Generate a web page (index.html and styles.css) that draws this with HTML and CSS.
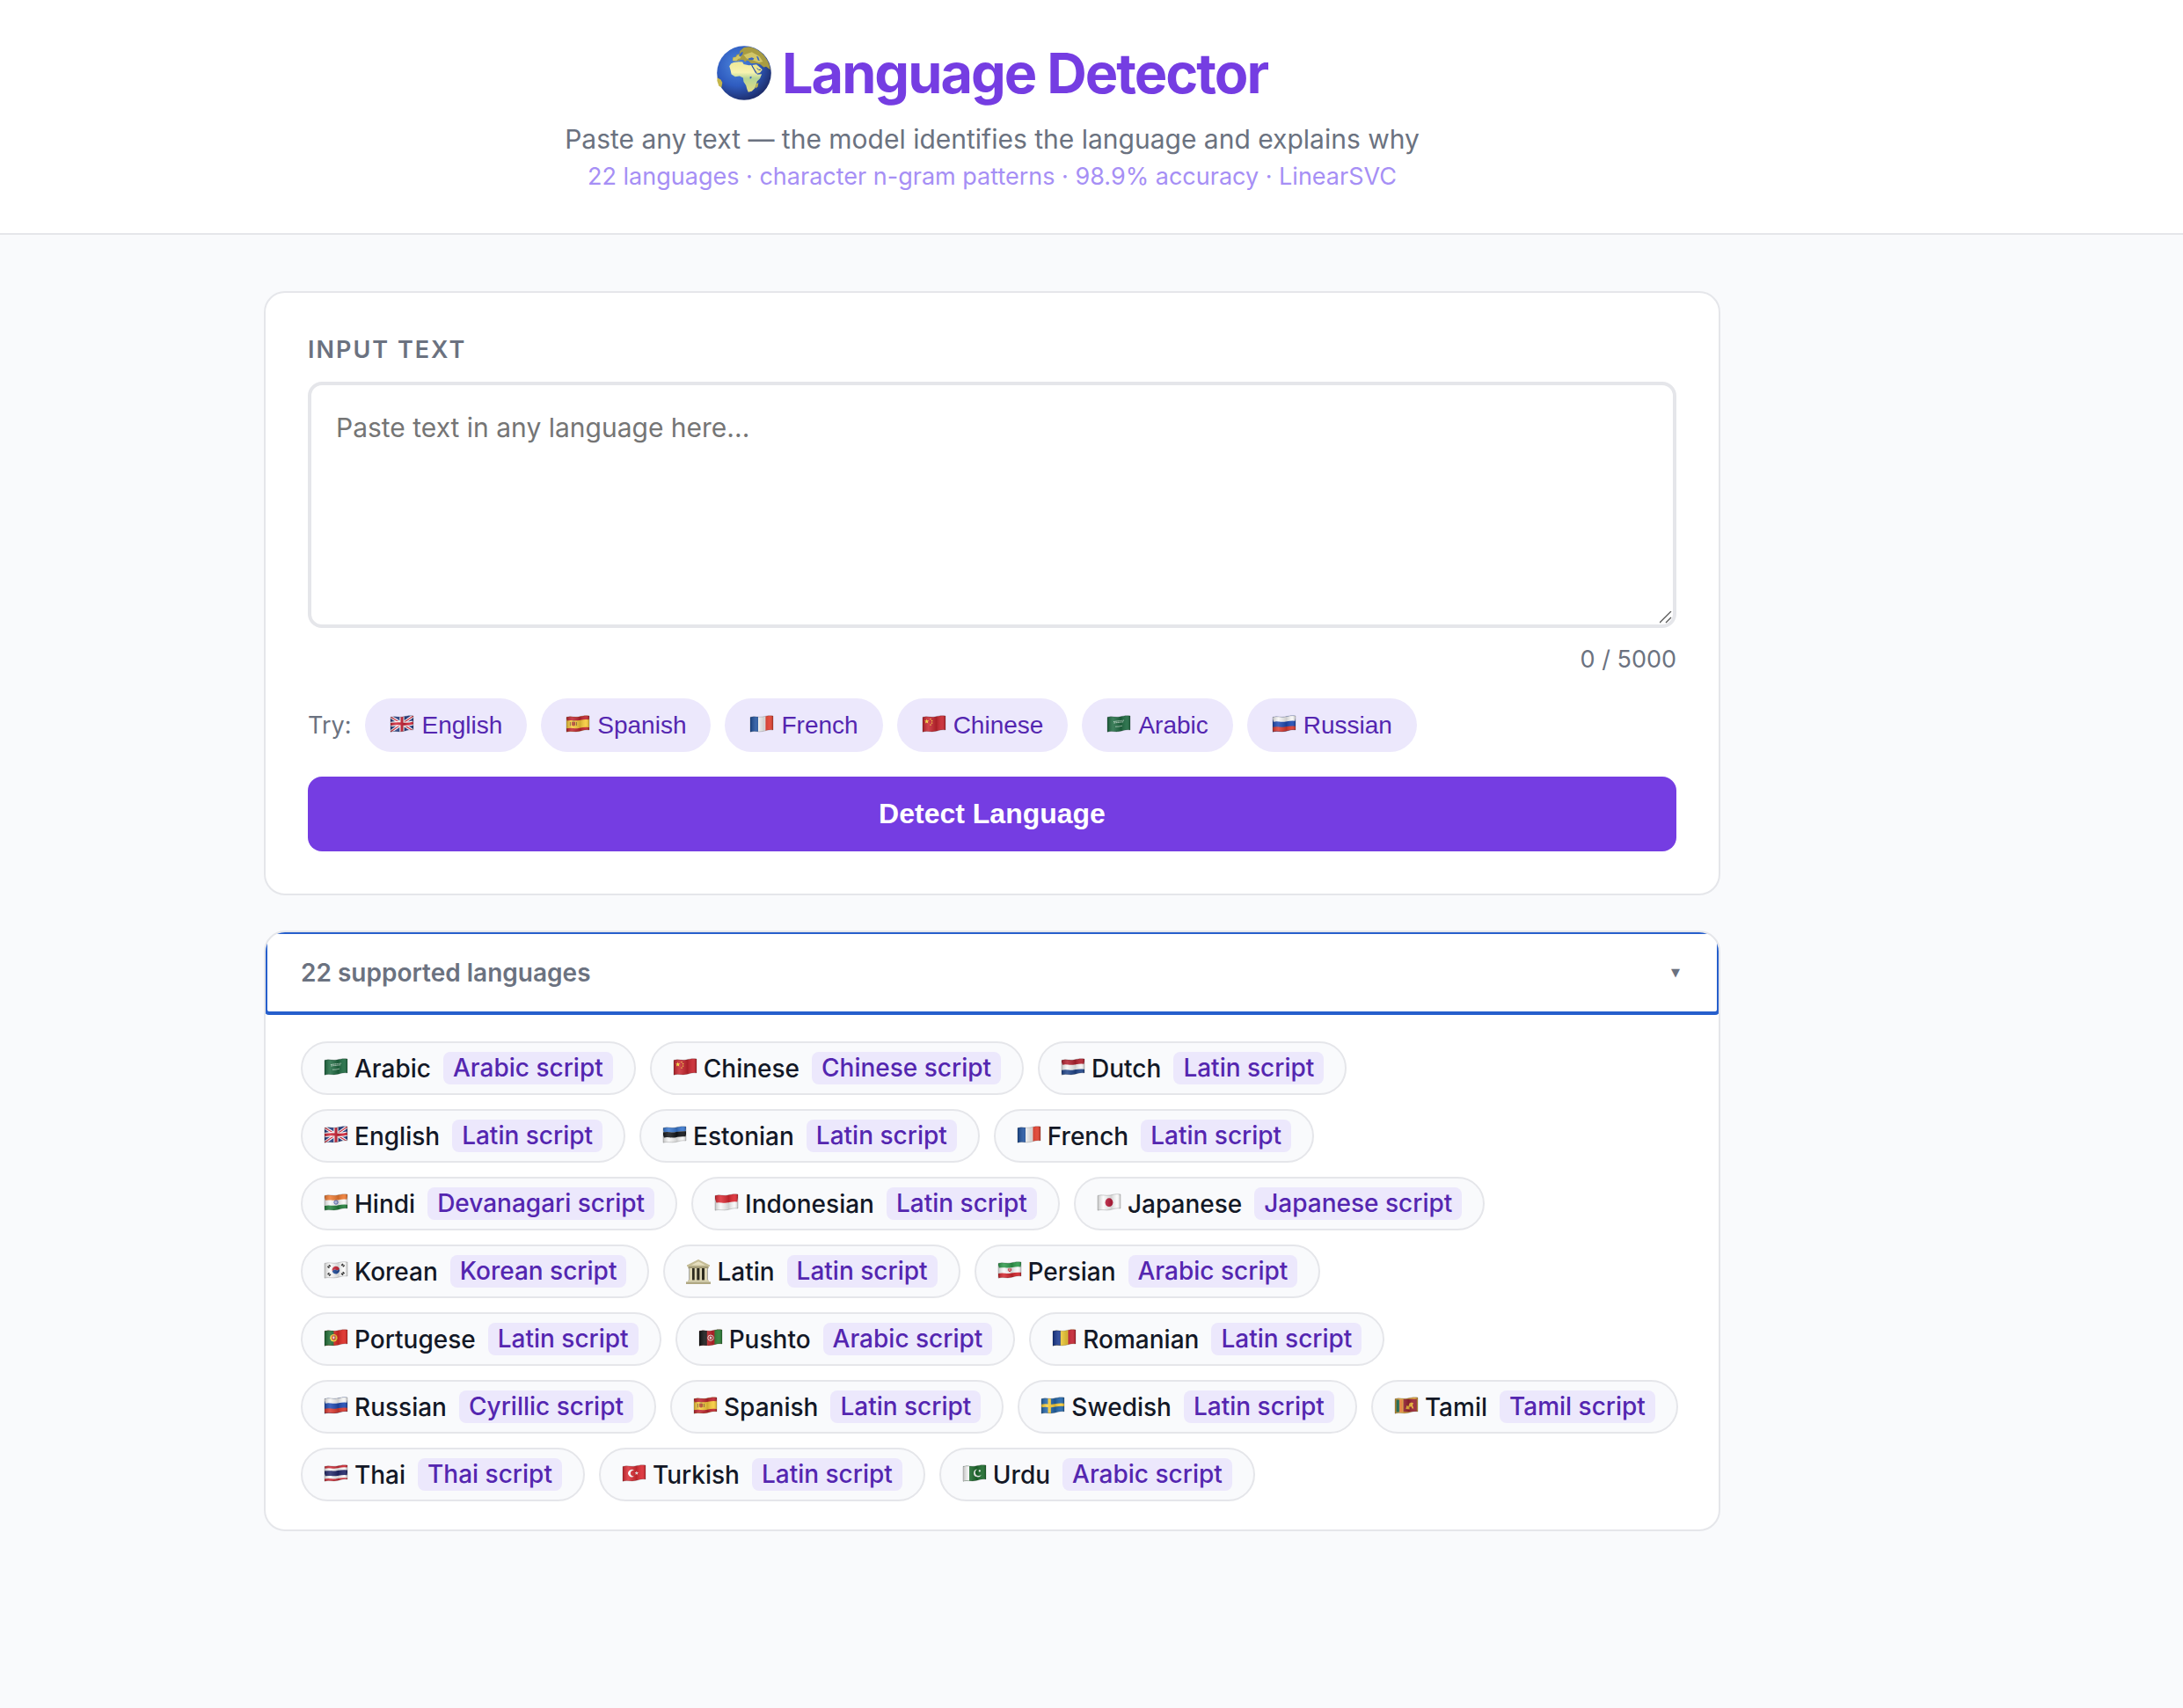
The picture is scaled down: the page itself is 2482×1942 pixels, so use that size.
FILE: index.html
```html
<!DOCTYPE html>
<html lang="en">
<head>
  <meta charset="UTF-8">
  <meta name="viewport" content="width=device-width, initial-scale=1.0">
  <title>Language Detector</title>
  <link rel="stylesheet" href="styles.css">
</head>
<body>
  <!-- Flag icons -->
  <svg class="sprite" aria-hidden="true">
    <defs>
      <path id="band" d="M0 1.2C5-.4 9 1.8 14 .8S21-.8 26 0" fill="none"/>
      <path id="cloth" d="M0 2.4C5 .8 9 3 14 2S21 .2 26 1V17C21 16.2 19 17.6 14 18.6S5 17.6 0 19.2Z"/>
      <clipPath id="wave"><use href="#cloth"/></clipPath>
      <linearGradient id="fold">
        <stop offset="0" stop-color="#000" stop-opacity=".22"/>
        <stop offset=".25" stop-color="#fff" stop-opacity=".14"/>
        <stop offset=".6" stop-color="#000" stop-opacity=".16"/>
        <stop offset=".85" stop-color="#fff" stop-opacity=".08"/>
        <stop offset="1" stop-color="#000" stop-opacity=".22"/>
      </linearGradient>
      <g id="shade">
        <use href="#cloth" fill="url(#fold)" stroke="#000" stroke-opacity=".22" stroke-width=".8"/>
      </g>
      <radialGradient id="sea" cx=".38" cy=".35" r=".7">
        <stop offset="0" stop-color="#4d86dc"/>
        <stop offset=".55" stop-color="#2f5cc0"/>
        <stop offset="1" stop-color="#1c2a66"/>
      </radialGradient>
      <linearGradient id="land" x1="0" y1="0" x2="0" y2="1">
        <stop offset="0" stop-color="#eee896"/>
        <stop offset=".35" stop-color="#f8f3b0"/>
        <stop offset=".55" stop-color="#b5d596"/>
        <stop offset="1" stop-color="#e6dc82"/>
      </linearGradient>
    </defs>

    <symbol id="sa" viewBox="-1 0 28 24">
      <g clip-path="url(#wave)"><rect width="26" height="20" fill="#1f6b42"/>
        <path d="M7 7.5q6-.8 12-1.4M7.5 9q6-.8 11-1.2" stroke="#cfe3d6" stroke-width="1" stroke-dasharray="1.6 .6" fill="none"/>
        <path d="M9 13.2q4 .2 8-1" stroke="#a9cdb7" stroke-width=".9" fill="none"/></g>
      <use href="#shade"/>
    </symbol>
    <symbol id="cn" viewBox="-1 0 28 24">
      <g clip-path="url(#wave)"><rect width="26" height="20" fill="#c9262f"/>
        <path d="M4.6 4.4l.7 1.9 2 .1-1.6 1.2.6 2-1.7-1.2-1.7 1.2.6-2L2 6.4l2-.1z" fill="#ffe23d"/>
        <path d="M8.4 4h1.2v1.2H8.4zM10 6h1.2v1.2H10zM10 8.6h1.2v1.2H10zM8.4 10.6h1.2v1.2H8.4z" fill="#ffe23d"/></g>
      <use href="#shade"/>
    </symbol>
    <symbol id="nl" viewBox="-1 0 28 24">
      <g clip-path="url(#wave)" stroke-width="6.6"><rect width="26" height="20" fill="#f5f5f5"/>
        <use href="#band" y="3.4" stroke="#b32230"/><use href="#band" y="16" stroke="#21468b"/></g>
      <use href="#shade"/>
    </symbol>
    <symbol id="gb" viewBox="-1 0 28 24">
      <g clip-path="url(#wave)"><rect width="26" height="20" fill="#20397f"/>
        <path d="M0 2l26 16M0 19L26 1" stroke="#fff" stroke-width="3.4"/>
        <path d="M0 2l26 16M0 19L26 1" stroke="#cf2539" stroke-width="1.3"/>
        <path d="M13 0v20M0 10.6q6-1.4 13-.6t13-1" stroke="#fff" stroke-width="5.4" fill="none"/>
        <path d="M13 0v20M0 10.6q6-1.4 13-.6t13-1" stroke="#cf2539" stroke-width="3" fill="none"/></g>
      <use href="#shade"/>
    </symbol>
    <symbol id="ee" viewBox="-1 0 28 24">
      <g clip-path="url(#wave)" stroke-width="6"><rect width="26" height="20" fill="#f6f6f6"/>
        <use href="#band" y="3.6" stroke="#3a78cf"/><use href="#band" y="9.4" stroke="#14161a"/></g>
      <use href="#shade"/>
    </symbol>
    <symbol id="fr" viewBox="-1 0 28 24">
      <g clip-path="url(#wave)"><rect width="26" height="20" fill="#f8f8f8"/>
        <rect width="9" height="20" fill="#1c4f9c"/><rect x="17.4" width="9" height="20" fill="#e2402f"/></g>
      <use href="#shade"/>
    </symbol>
    <symbol id="in" viewBox="-1 0 28 24">
      <g clip-path="url(#wave)" stroke-width="6.4"><rect width="26" height="20" fill="#f8f8f8"/>
        <use href="#band" y="3.6" stroke="#f07c33"/><use href="#band" y="16" stroke="#23803c"/></g>
      <circle cx="13" cy="10" r="2.2" fill="#c3cbea" stroke="#3c4fa8" stroke-width=".8"/>
      <use href="#shade"/>
    </symbol>
    <symbol id="id" viewBox="-1 0 28 24">
      <g clip-path="url(#wave)" stroke-width="9.6"><rect width="26" height="20" fill="#f8f8f8"/>
        <use href="#band" y="4.8" stroke="#dd2a33"/></g>
      <use href="#shade"/>
    </symbol>
    <symbol id="jp" viewBox="-1 0 28 24">
      <use href="#cloth" fill="#fafafa"/>
      <ellipse cx="13" cy="10.2" rx="4.4" ry="4.9" fill="#c0203f"/>
      <use href="#shade"/>
    </symbol>
    <symbol id="kr" viewBox="-1 0 28 24">
      <use href="#cloth" fill="#fbfbfb"/>
      <path d="M8.8 11.4a4.3 4.3 0 0 1 8.2-2.6q-2 2.6-4 1.2t-4.2 1.4" fill="#cf2b3c"/>
      <path d="M17 8.8a4.3 4.3 0 0 1-8.2 2.6q2-2.8 4.2-1.4t4-1.2" fill="#23509e"/>
      <path d="M4 7.4l2.6-3.2M19.6 3.4l3 2.8M4 13.6l2.8 2.8M19.6 15.4l2.8-3" stroke="#222" stroke-width="2.6" stroke-dasharray="1.6 .5"/>
      <use href="#shade"/>
    </symbol>
    <symbol id="va" viewBox="0 0 28 28">
      <path d="M14 0L27 6.4V8H1V6.4z" fill="#c4bc95"/>
      <path d="M14 2.2l8 4.2H6z" fill="#e6dfc0"/>
      <path d="M2.4 8h23.2v2.2H2.4z" fill="#a29a76"/>
      <path d="M3.6 10h20.8v14H3.6z" fill="#2d2a1e"/>
      <path d="M4 10h3v14H4zM9.7 10h2.6v14H9.7zM15.4 10H18v14h-2.6zM21 10h3v14h-3z" fill="#ddd6b4"/>
      <path d="M2 23.4h24v2H2z" fill="#d8d1ae"/><path d="M0 25.4h28V28H0z" fill="#b0a883"/>
    </symbol>
    <symbol id="ir" viewBox="-1 0 28 24">
      <g clip-path="url(#wave)" stroke-width="6.2"><rect width="26" height="20" fill="#f8f8f8"/>
        <use href="#band" y="3.4" stroke="#2f9a4c"/><use href="#band" y="16" stroke="#d3262d"/></g>
      <path d="M11.4 8.4q-1 2.6 1.6 3.4 2.6-.8 1.6-3.4M13 7.8v4" stroke="#d8333a" stroke-width="1" fill="none"/>
      <use href="#shade"/>
    </symbol>
    <symbol id="pt" viewBox="-1 0 28 24">
      <g clip-path="url(#wave)"><rect width="26" height="20" fill="#df2c26"/><rect width="10.4" height="20" fill="#1f6d34"/></g>
      <circle cx="10.4" cy="10.2" r="4.2" fill="#f3d43a"/>
      <path d="M8.3 7.6h4.2v3.6q-2.1 3.2-4.2 0z" fill="#d12a2a"/><path d="M9.4 8.6h2v2.2q-1 1.4-2 0z" fill="#f4f4f4"/>
      <use href="#shade"/>
    </symbol>
    <symbol id="af" viewBox="-1 0 28 24">
      <g clip-path="url(#wave)"><rect width="26" height="20" fill="#c1252b"/><rect width="8.8" height="20" fill="#111"/>
        <rect x="17.4" width="9" height="20" fill="#2a7d33"/></g>
      <circle cx="13" cy="10.2" r="3.2" fill="none" stroke="#f2e6e2" stroke-width="1"/><path d="M11.8 8.8h2.4v2.8h-2.4z" fill="#f2e6e2"/>
      <use href="#shade"/>
    </symbol>
    <symbol id="ro" viewBox="-1 0 28 24">
      <g clip-path="url(#wave)"><rect width="26" height="20" fill="#f8d23c"/><rect width="8.8" height="20" fill="#15348c"/>
        <rect x="17.4" width="9" height="20" fill="#c42434"/></g>
      <use href="#shade"/>
    </symbol>
    <symbol id="ru" viewBox="-1 0 28 24">
      <g clip-path="url(#wave)" stroke-width="6.6"><rect width="26" height="20" fill="#1f4bb4"/>
        <use href="#band" y="3.4" stroke="#f6f6f6"/><use href="#band" y="16" stroke="#db3a30"/></g>
      <use href="#shade"/>
    </symbol>
    <symbol id="es" viewBox="-1 0 28 24">
      <g clip-path="url(#wave)" stroke-width="5"><rect width="26" height="20" fill="#f8cc3c"/>
        <use href="#band" y="2.8" stroke="#c12630"/><use href="#band" y="16.6" stroke="#c12630"/></g>
      <path d="M6 8h4v3.4q-2 2-4 0z" fill="#b5482f"/><path d="M4.4 8v4.4M11.4 8v4M6.4 7h3" stroke="#8a6a3a" stroke-width="1"/>
      <use href="#shade"/>
    </symbol>
    <symbol id="se" viewBox="-1 0 28 24">
      <g clip-path="url(#wave)"><rect width="26" height="20" fill="#2467ab"/>
        <path d="M9.2 0v20" stroke="#fbd03b" stroke-width="3.4"/><use href="#band" y="9.4" stroke="#fbd03b" stroke-width="3.4"/></g>
      <use href="#shade"/>
    </symbol>
    <symbol id="lk" viewBox="-1 0 28 24">
      <g clip-path="url(#wave)"><rect width="26" height="20" fill="#dba33a"/><path d="M1.6 3.6h3.4v14H1.6z" fill="#1d6c52"/>
        <path d="M5 3.6h3.4v14H5z" fill="#e5752c"/><path d="M9.6 2.8h15.2v14.4H9.6z" fill="#9a2434"/>
        <path d="M12.4 14l1-4 2 1 1-3.4 2.6-1.2 2 1.2-1 2 1.2 4-1.6-.2-1-2.2-2.2.6.2 2.6z" fill="#f0b83a"/></g>
      <use href="#shade"/>
    </symbol>
    <symbol id="th" viewBox="-1 0 28 24">
      <g clip-path="url(#wave)"><rect width="26" height="20" fill="#f6f6f6"/>
        <use href="#band" y="1.8" stroke="#cf2b36" stroke-width="3.6"/><use href="#band" y="9.4" stroke="#24296a" stroke-width="5.8"/>
        <use href="#band" y="17" stroke="#cf2b36" stroke-width="3.2"/></g>
      <use href="#shade"/>
    </symbol>
    <symbol id="tr" viewBox="-1 0 28 24">
      <use href="#cloth" fill="#dc2c34"/>
      <path d="M13 6.8a4.2 4.2 0 1 0 0 6.6 3.4 3.4 0 1 1 0-6.6" fill="#fff"/>
      <path d="M15.8 7.6l.6 1.5 1.6.1-1.2 1 .4 1.6-1.4-.9-1.4.9.4-1.6-1.2-1 1.6-.1z" fill="#fff"/>
      <use href="#shade"/>
    </symbol>
    <symbol id="pk" viewBox="-1 0 28 24">
      <g clip-path="url(#wave)"><rect width="26" height="20" fill="#1d6b2d"/><rect width="7" height="20" fill="#f6f6f6"/></g>
      <path d="M16.4 5.4a4.5 4.5 0 1 0 4.4 6 3.9 3.9 0 1 1-4.4-6" fill="#fff"/><circle cx="18.8" cy="7.4" r="1.1" fill="#fff"/>
      <use href="#shade"/>
    </symbol>
    <symbol id="globe" viewBox="0 0 187 187">
      <circle cx="93.500" cy="93.500" r="93" fill="url(#sea)"/>
      <path d="M54 52l1-12 10-2 3-8 10-2 1-10 14-12 18-2c28 6 48 20 62 46 6 12 9 20 10 32l-6-4-8-6-8 2-12-10-12-4-20 0-8-8-6-2-6 6-6-8-10 0-6 4z" fill="#a89c42"/>
      <path d="M55 51l1-10 9-2 8-8 10 4-2 8-8 2-6 7zM92 32l28-10 26 14 12 18-14 4-20-8-22-6z" fill="#d2c667"/>
      <path d="M82 24l8-4-2 10-8 8-4-4z" fill="#3766c4"/>
      <path d="M108 44l12-4 8 4-4 5-14 0zM136 36l6 2 5 14-6-2z" fill="#3766c4"/>
      <path d="M43 70l6-9 9-4 17-2 13 1 4 7 18 4 8-1 6 12 8 15 8 6 14-2-6 15-10 10-3 12-5 12-10 10-12 3-4-9-4-14-8-12-2-14-12-6-15 2-13-8-3-14z" fill="url(#land)"/>
      <path d="M122 66l14-2 14 12 6 6-8 11-11 3-8-12z" fill="#ece590"/>
      <path d="M138 77l6 6 7-1" fill="none" stroke="#2b4f9c" stroke-width="3"/>
      <path d="M120 68l9 14 8 13" fill="none" stroke="#2b4f9c" stroke-width="3"/>
      <path d="M134 132l9-5-3 14-7 5zM2 109l12 8 5 10-3 16-9-5-6-18z" fill="#c5b64b"/>
      <path d="M113 107l6-2v6l-5 3z" fill="#3766c4"/>
    </symbol>
  </svg>

  <header>
    <h1><svg class="globe" aria-hidden="true"><use href="#globe"/></svg>Language Detector</h1>
    <p class="subtitle">Paste any text — the model identifies the language and explains why</p>
    <p class="tagline">22 languages · character n-gram patterns · 98.9% accuracy · LinearSVC</p>
  </header>

  <main>
    <section class="card input-card">
      <label for="input-text">Input text</label>
      <textarea id="input-text" maxlength="5000" placeholder="Paste text in any language here..."></textarea>
      <div class="counter" id="counter">0 / 5000</div>
      <div class="examples">
        <span>Try:</span>
        <button type="button" class="example"><svg class="flag"><use href="#gb"/></svg>English</button>
        <button type="button" class="example"><svg class="flag"><use href="#es"/></svg>Spanish</button>
        <button type="button" class="example"><svg class="flag"><use href="#fr"/></svg>French</button>
        <button type="button" class="example"><svg class="flag"><use href="#cn"/></svg>Chinese</button>
        <button type="button" class="example"><svg class="flag"><use href="#sa"/></svg>Arabic</button>
        <button type="button" class="example"><svg class="flag"><use href="#ru"/></svg>Russian</button>
      </div>
      <button type="button" class="detect">Detect Language</button>
    </section>

    <!-- Supported languages -->
    <details class="card languages" open>
      <summary><span>22 supported languages</span><span class="arrow">▼</span></summary>
      <ul class="language-list">
        <li><svg class="flag"><use href="#sa"/></svg>Arabic <span class="script">Arabic script</span></li>
        <li><svg class="flag"><use href="#cn"/></svg>Chinese <span class="script">Chinese script</span></li>
        <li><svg class="flag"><use href="#nl"/></svg>Dutch <span class="script">Latin script</span></li>
        <li><svg class="flag"><use href="#gb"/></svg>English <span class="script">Latin script</span></li>
        <li><svg class="flag"><use href="#ee"/></svg>Estonian <span class="script">Latin script</span></li>
        <li><svg class="flag"><use href="#fr"/></svg>French <span class="script">Latin script</span></li>
        <li><svg class="flag"><use href="#in"/></svg>Hindi <span class="script">Devanagari script</span></li>
        <li><svg class="flag"><use href="#id"/></svg>Indonesian <span class="script">Latin script</span></li>
        <li><svg class="flag"><use href="#jp"/></svg>Japanese <span class="script">Japanese script</span></li>
        <li><svg class="flag"><use href="#kr"/></svg>Korean <span class="script">Korean script</span></li>
        <li><svg class="flag temple"><use href="#va"/></svg>Latin <span class="script">Latin script</span></li>
        <li><svg class="flag"><use href="#ir"/></svg>Persian <span class="script">Arabic script</span></li>
        <li><svg class="flag"><use href="#pt"/></svg>Portugese <span class="script">Latin script</span></li>
        <li><svg class="flag"><use href="#af"/></svg>Pushto <span class="script">Arabic script</span></li>
        <li><svg class="flag"><use href="#ro"/></svg>Romanian <span class="script">Latin script</span></li>
        <li><svg class="flag"><use href="#ru"/></svg>Russian <span class="script">Cyrillic script</span></li>
        <li><svg class="flag"><use href="#es"/></svg>Spanish <span class="script">Latin script</span></li>
        <li><svg class="flag"><use href="#se"/></svg>Swedish <span class="script">Latin script</span></li>
        <li><svg class="flag"><use href="#lk"/></svg>Tamil <span class="script">Tamil script</span></li>
        <li><svg class="flag"><use href="#th"/></svg>Thai <span class="script">Thai script</span></li>
        <li><svg class="flag"><use href="#tr"/></svg>Turkish <span class="script">Latin script</span></li>
        <li><svg class="flag"><use href="#pk"/></svg>Urdu <span class="script">Arabic script</span></li>
      </ul>
    </details>
  </main>

  <script>
    const input = document.getElementById('input-text');
    const counter = document.getElementById('counter');

    input.addEventListener('input', () => {
      counter.textContent = input.value.length + ' / 5000';
    });
  </script>
</body>
</html>
```
FILE: styles.css
```css
:root {
  --bg: #f9fafc;
  --border: #e5e6ea;
  --text: #131826;
  --muted: #6b7280;
  --accent: #753de2;
  --accent-dark: #5426b0;
  --accent-light: #ece8fc;
  --rail: 226px;
}

* {
  margin: 0;
  padding: 0;
  box-sizing: border-box;
}

body {
  font-family: Inter, "Liberation Sans", sans-serif;
  background: var(--bg);
  color: var(--text);
  min-height: 100vh;
}

.sprite {
  position: absolute;
  width: 0;
  height: 0;
}

/* Header */
header {
  background: white;
  border-bottom: 2px solid var(--border);
  padding: 44px var(--rail) 45px 0;
  text-align: center;
}

h1 {
  display: flex;
  justify-content: center;
  align-items: center;
  gap: 12px;
  margin-bottom: 12px;
  font-size: 63px;
  line-height: 78px;
  font-weight: 700;
  letter-spacing: -2px;
  color: var(--accent);
}

.globe {
  width: 62px;
  height: 62px;
}

.subtitle {
  font-size: 30px;
  line-height: 48px;
  color: var(--muted);
}

.tagline {
  font-size: 27px;
  line-height: 38px;
  color: #a68ff5;
}

/* Layout */
main {
  padding: 64px calc(var(--rail) + 32px) 64px 32px;
}

.card {
  max-width: 1656px;
  margin: 0 auto 40px;
  background: white;
  border: 2px solid var(--border);
  border-radius: 24px;
}

/* Input card */
.input-card {
  padding: 48px;
}

label {
  display: block;
  margin-bottom: 20px;
  font-size: 27px;
  line-height: 33px;
  font-weight: 600;
  letter-spacing: 2px;
  text-transform: uppercase;
  color: var(--muted);
}

textarea {
  display: block;
  width: 100%;
  height: 280px;
  padding: 24px 28px;
  border: 4px solid var(--border);
  border-radius: 16px;
  outline: none;
  resize: vertical;
  font-family: inherit;
  font-size: 30px;
  line-height: 48px;
  color: var(--text);
}

textarea::placeholder {
  color: #757575;
}

textarea::-webkit-resizer {
  background: url("data:image/svg+xml,%3Csvg xmlns='http://www.w3.org/2000/svg' viewBox='0 0 15 15'%3E%3Cpath d='M0 13L13 0M7 13l6-6' stroke='%23555' stroke-width='1.3'/%3E%3C/svg%3E") no-repeat;
}

.counter {
  margin: 20px 0 28px;
  font-size: 27px;
  line-height: 32px;
  text-align: right;
  color: var(--muted);
}

.examples {
  display: flex;
  flex-wrap: wrap;
  align-items: center;
  gap: 16px;
  margin-bottom: 28px;
  font-size: 27px;
  color: var(--muted);
}

.example {
  display: inline-flex;
  align-items: center;
  gap: 8px;
  padding: 14px 28px;
  border: none;
  border-radius: 40px;
  background: var(--accent-light);
  font-family: "Liberation Sans", Arial, sans-serif;
  font-size: 28px;
  line-height: 33px;
  color: var(--accent-dark);
  cursor: pointer;
}

.flag {
  flex: none;
  width: 28px;
  height: 24px;
}

.flag.temple {
  height: 28px;
}

.detect {
  width: 100%;
  padding: 24px;
  border: none;
  border-radius: 16px;
  background: var(--accent);
  font-family: "Liberation Sans", Arial, sans-serif;
  font-size: 32px;
  line-height: 37px;
  font-weight: 700;
  color: white;
  cursor: pointer;
}

/* Supported languages */
.languages {
  overflow: hidden;
}

summary {
  display: flex;
  justify-content: space-between;
  align-items: center;
  padding: 28px 40px;
  border-radius: 4px;
  outline: 4px solid #265fcc;
  outline-offset: -2px;
  font-size: 28px;
  line-height: 36px;
  font-weight: 600;
  color: var(--muted);
  cursor: pointer;
}

.arrow {
  padding: 0 4px;
  font-family: "DejaVu Sans", sans-serif;
  font-size: 13px;
}

.language-list {
  display: flex;
  flex-wrap: wrap;
  gap: 16px;
  padding: 32px 40px;
  list-style: none;
}

.language-list li {
  display: flex;
  align-items: center;
  gap: 7px;
  padding: 10px 24px;
  border: 2px solid var(--border);
  border-radius: 40px;
  background: var(--bg);
  font-size: 28px;
  font-weight: 500;
}

.script {
  margin-left: 7px;
  padding: 0 11px;
  border-radius: 8px;
  background: var(--accent-light);
  line-height: 37px;
  color: var(--accent-dark);
}
```
